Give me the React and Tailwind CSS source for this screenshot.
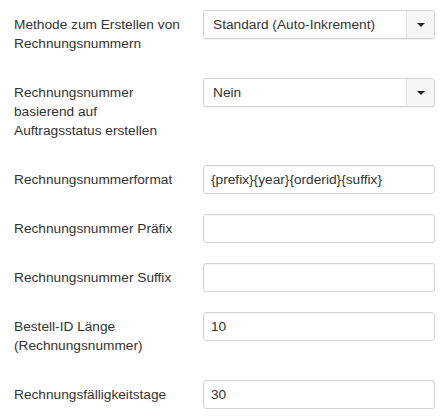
import React from 'react';

const rows = [
    { label: 'Methode zum Erstellen von Rechnungsnummern', type: 'select', value: 'Standard (Auto-Inkrement)' },
    { label: 'Rechnungsnummer basierend auf Auftragsstatus erstellen', type: 'select', value: 'Nein' },
    { label: 'Rechnungsnummerformat', type: 'input', value: '{prefix}{year}{orderid}{suffix}' },
    { label: 'Rechnungsnummer Präfix', type: 'input', value: '' },
    { label: 'Rechnungsnummer Suffix', type: 'input', value: '' },
    { label: 'Bestell-ID Länge (Rechnungsnummer)', type: 'input', value: '10' },
    { label: 'Rechnungsfälligkeitstage', type: 'input', value: '30' },
];

const Select = ({ value }) => (
    <div className="flex h-[29px] w-full rounded-[3px] border border-[#d4d4d4] bg-white shadow-[0_1px_1px_rgba(0,0,0,0.06)]">
        <div className="flex-1 flex items-center pl-[9px] text-[#333] leading-none">{value}</div>
        <div className="w-[28px] flex items-center justify-center border-l border-[#e3e3e3] bg-[#f6f6f6] rounded-r-[3px]">
            <svg width="8" height="4" viewBox="0 0 8 4">
                <path d="M0 0h8L4 4z" fill="#222" />
            </svg>
        </div>
    </div>
);

const Input = ({ value }) => (
    <div className="flex items-center h-[29px] w-full rounded-[3px] border border-[#d4d4d4] bg-white pl-[7px] text-[#333] leading-none shadow-[inset_0_1px_1px_rgba(0,0,0,0.04)]">
        {value}
    </div>
);

export default function App() {
    return (
        <div className="bg-white min-h-[417px] pl-[14px] pr-[10px] pt-[10px] text-[13.7px] text-[#333]" style={{ fontFamily: '"Liberation Sans", Arial, sans-serif' }}>
            <div className="flex flex-col gap-[20px]">
                {rows.map((row) => (
                    <div key={row.label} className="flex items-start">
                        <label className="w-[168px] shrink-0 py-[5px] leading-[19px]">{row.label}</label>
                        <div className="flex-1 ml-[21px]">
                            {row.type === 'select' ? <Select value={row.value} /> : <Input value={row.value} />}
                        </div>
                    </div>
                ))}
            </div>
        </div>
    );
}
